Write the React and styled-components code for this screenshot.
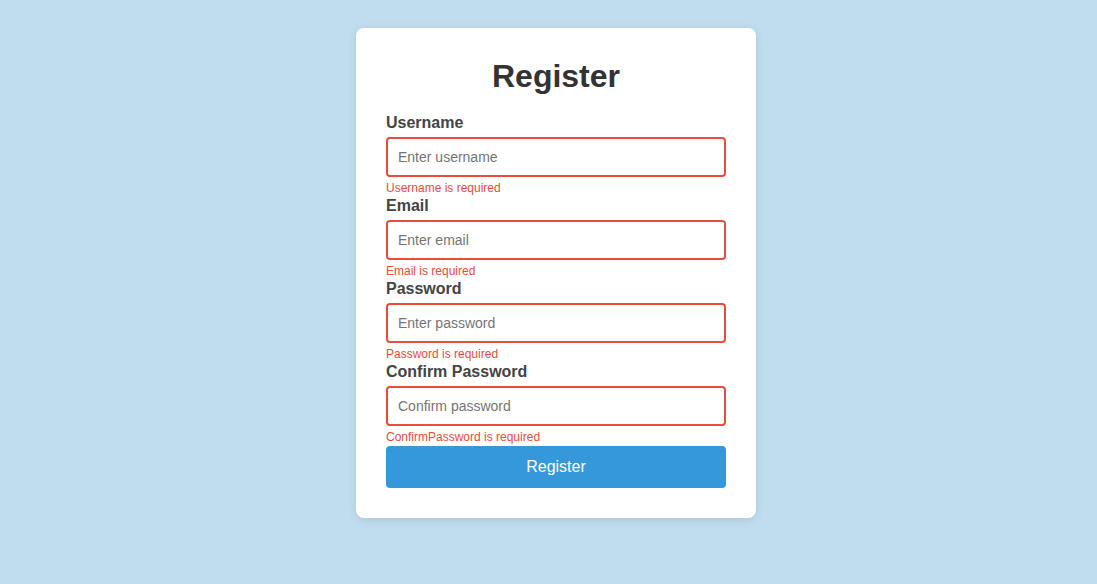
import React from "react";
import styled, { createGlobalStyle } from "styled-components";

const Global = createGlobalStyle`
  html, body { margin: 0; padding: 0; }
  body {
    background: #c0ddee;
    font-family: "Liberation Sans", Arial, sans-serif;
    min-height: 584px;
  }
  * { box-sizing: border-box; }
`;

const Page = styled.div`
  display: flex;
  justify-content: center;
  align-items: flex-start;
  padding: 28px 0 0 15px;
  min-height: 584px;
`;

const Card = styled.form`
  width: 400px;
  background: #ffffff;
  border-radius: 8px;
  padding: 30px;
  box-shadow: 0 2px 10px rgba(0, 0, 0, 0.1);
  display: flex;
  flex-direction: column;
`;

const Title = styled.h2`
  margin: 0 0 19px;
  text-align: center;
  font-size: 32px;
  font-weight: bold;
  color: #333333;
`;

const Field = styled.div`
  display: flex;
  flex-direction: column;
`;

const Label = styled.label`
  font-size: 16px;
  font-weight: bold;
  color: #444444;
  margin-bottom: 5px;
`;

const Input = styled.input`
  width: 100%;
  height: 40px;
  padding: 10px;
  font-size: 14px;
  font-family: "Liberation Sans", Arial, sans-serif;
  border: 2px solid ${(p) => (p.$invalid ? "#e74c3c" : "#cccccc")};
  border-radius: 4px;
  outline: none;
  color: #333;
  &::placeholder { color: #757575; }
`;

const ErrorText = styled.span`
  font-size: 12px;
  color: #e74c3c;
  margin-top: 3px;
  line-height: 17px;
`;

const Button = styled.button`
  margin-top: 0;
  width: 100%;
  height: 42px;
  border: none;
  border-radius: 4px;
  background: #3498db;
  color: #ffffff;
  font-size: 16px;
  font-family: "Liberation Sans", Arial, sans-serif;
  cursor: pointer;
`;

const fields = [
  { id: "username", label: "Username", placeholder: "Enter username", type: "text", error: "Username is required" },
  { id: "email", label: "Email", placeholder: "Enter email", type: "email", error: "Email is required" },
  { id: "password", label: "Password", placeholder: "Enter password", type: "password", error: "Password is required" },
  { id: "confirm", label: "Confirm Password", placeholder: "Confirm password", type: "password", error: "ConfirmPassword is required" },
];

export default function App() {
  return (
    <>
      <Global />
      <Page>
        <Card onSubmit={(e) => e.preventDefault()}>
          <Title>Register</Title>
          {fields.map((f) => (
            <Field key={f.id}>
              <Label htmlFor={f.id}>{f.label}</Label>
              <Input id={f.id} type={f.type} placeholder={f.placeholder} $invalid />
              <ErrorText>{f.error}</ErrorText>
            </Field>
          ))}
          <Button type="submit">Register</Button>
        </Card>
      </Page>
    </>
  );
}
